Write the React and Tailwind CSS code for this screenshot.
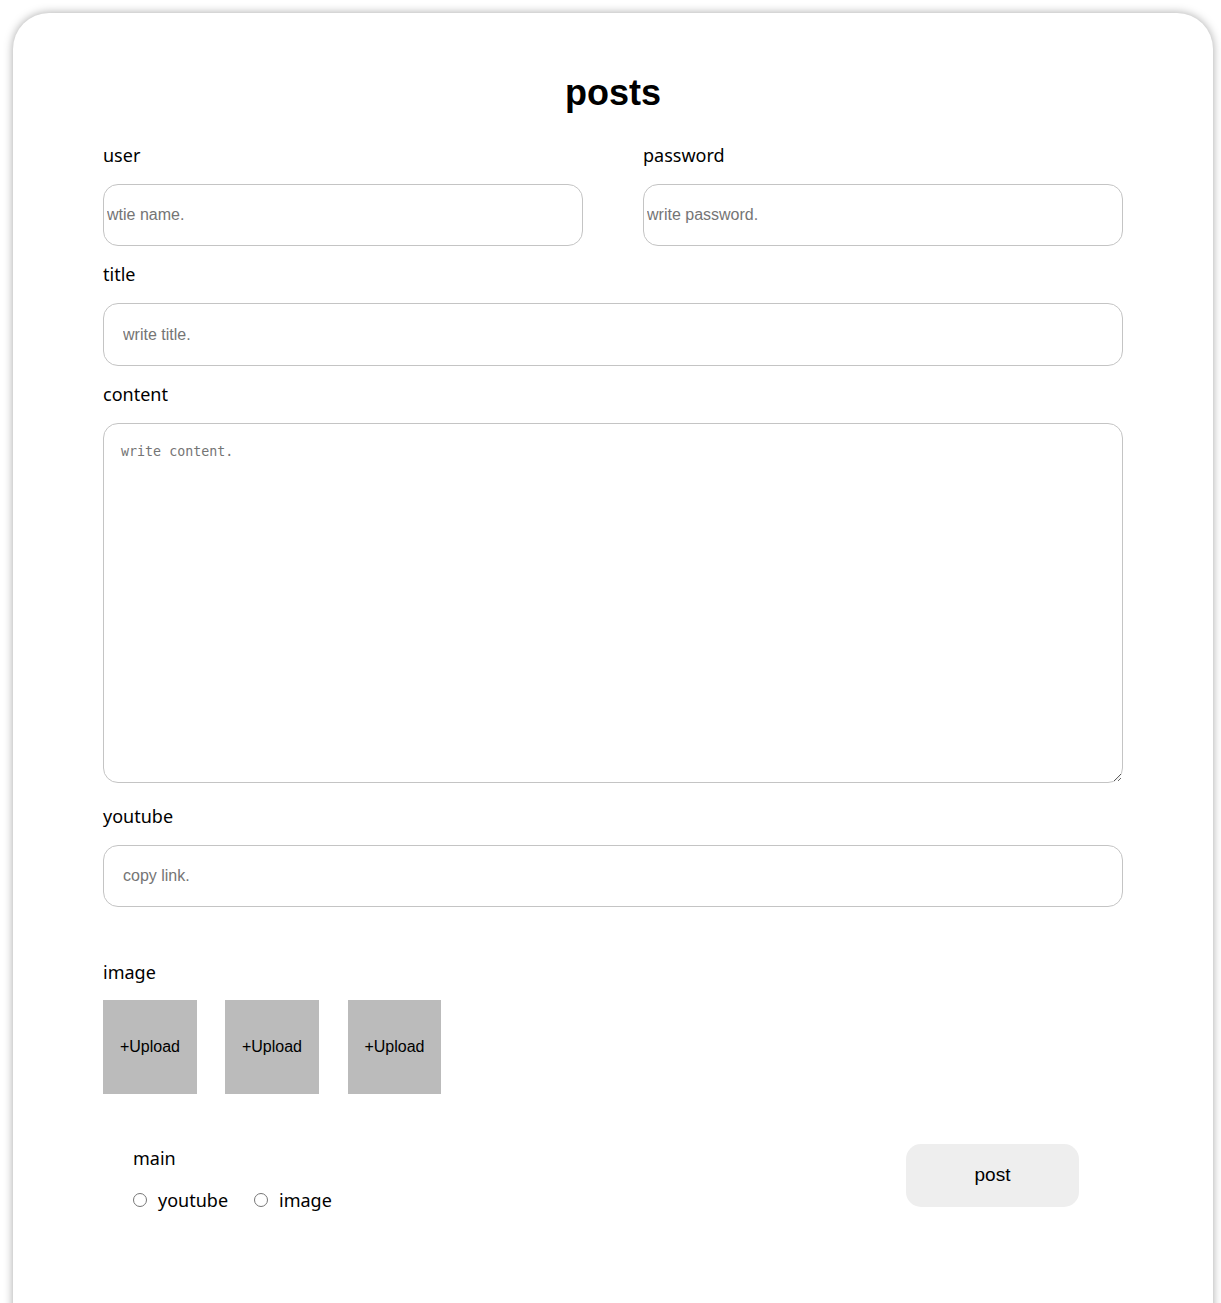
import React from "react";

const labelCls = "block text-[18px] leading-[24px] text-black mb-[17px]";
const inputBase =
  "block h-[62px] border border-[#c4c4c4] rounded-[15px] text-[16px] text-black placeholder:text-[#757575] outline-none bg-white";

export default function App() {
  return (
    <div className="h-[1303px] bg-white pt-[13px] overflow-hidden" style={{ fontFamily: '"Noto Sans", "Liberation Sans", sans-serif' }}>
      <div className="ml-[13px] w-[1200px] min-h-[1400px] bg-white rounded-t-[36px] shadow-[0_0_10px_rgba(0,0,0,0.35)] px-[90px] pt-[58px]">
        <h1 className="text-center text-[36px] leading-[44px] font-bold text-black mb-[28px]" style={{ fontFamily: '"Liberation Sans", Arial, sans-serif' }}>
          posts
        </h1>

        <div className="flex gap-[60px]">
          <div className="w-[480px]">
            <label className={labelCls}>user</label>
            <input
              className={inputBase + " w-full px-[3px]"}
              style={{ fontFamily: '"Liberation Sans", Arial, sans-serif' }}
              placeholder="wtie name."
            />
          </div>
          <div className="w-[480px]">
            <label className={labelCls}>password</label>
            <input
              type="password"
              className={inputBase + " w-full px-[3px]"}
              style={{ fontFamily: '"Liberation Sans", Arial, sans-serif' }}
              placeholder="write password."
            />
          </div>
        </div>

        <div className="mt-[16px]">
          <label className={labelCls}>title</label>
          <input
            className={inputBase + " w-full h-[63px] px-[19px]"}
            style={{ fontFamily: '"Liberation Sans", Arial, sans-serif' }}
            placeholder="write title."
          />
        </div>

        <div className="mt-[16px]">
          <label className={labelCls}>content</label>
          <textarea
            className="block w-full h-[360px] border border-[#c4c4c4] rounded-[15px] px-[17px] pt-[20px] pb-[17px] text-[13.33px] leading-[16px] text-black placeholder:text-[#757575] outline-none resize-y"
            style={{ fontFamily: '"DejaVu Sans Mono", "Liberation Mono", monospace' }}
            placeholder="write content."
          />
        </div>

        <div className="mt-[21px]">
          <label className={labelCls}>youtube</label>
          <input
            className={inputBase + " w-full px-[19px]"}
            style={{ fontFamily: '"Liberation Sans", Arial, sans-serif' }}
            placeholder="copy link."
          />
        </div>

        <div className="mt-[53px]">
          <label className="block text-[18px] leading-[24px] text-black mb-[16px]">image</label>
          <div className="flex" style={{ fontFamily: '"Liberation Sans", Arial, sans-serif' }}>
            <div className="w-[94px] h-[94px] bg-[#bbbbbb] flex items-center justify-center text-[16px] text-black">
              +Upload
            </div>
            <div className="ml-[28px] w-[94px] h-[94px] bg-[#bbbbbb] flex items-center justify-center text-[16px] text-black">
              +Upload
            </div>
            <div className="ml-[29px] w-[93px] h-[94px] bg-[#bbbbbb] flex items-center justify-center text-[16px] text-black">
              +Upload
            </div>
          </div>
        </div>

        <div className="mt-[50px] flex justify-between items-start">
          <div className="pl-[30px] pt-[2px]">
            <div className="text-[18px] leading-[24px] text-black">main</div>
            <div className="flex items-center mt-[18px] text-[18px] leading-[24px] text-black">
              <label className="flex items-center">
                <input type="radio" name="main" className="w-[14px] h-[14px] m-0 mr-[11px] accent-gray-500" />
                youtube
              </label>
              <label className="flex items-center ml-[26px]">
                <input type="radio" name="main" className="w-[14px] h-[14px] m-0 mr-[11px] accent-gray-500" />
                image
              </label>
            </div>
          </div>
          <button
            className="w-[173px] h-[63px] bg-[#eeeeee] rounded-[15px] text-[19px] text-black mr-[44px]"
            style={{ fontFamily: '"Liberation Sans", Arial, sans-serif' }}
          >
            post
          </button>
        </div>
      </div>
    </div>
  );
}
